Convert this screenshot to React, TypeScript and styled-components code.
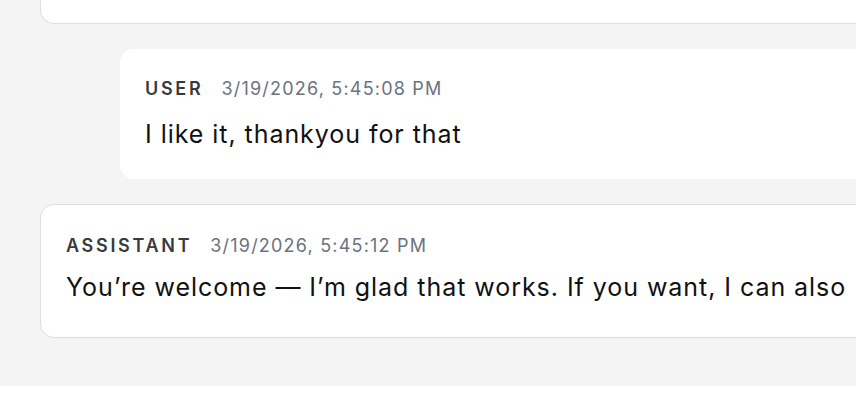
import React from 'react';
import styled, { createGlobalStyle } from 'styled-components';

type Role = 'user' | 'assistant';

interface IMessage {
    id: number;
    role: Role;
    time: string;
    text: string;
}

const messages: IMessage[] = [
    {
        id: 1,
        role: 'assistant',
        time: '3/19/2026, 5:44:51 PM',
        text: 'Here is a cleaner version of the layout with the spacing tightened up.',
    },
    {
        id: 2,
        role: 'user',
        time: '3/19/2026, 5:45:08 PM',
        text: 'I like it, thankyou for that',
    },
    {
        id: 3,
        role: 'assistant',
        time: '3/19/2026, 5:45:12 PM',
        text: 'You\u2019re welcome \u2014 I\u2019m glad that works. If you want, I can also',
    },
];

const App = (): JSX.Element => {
    return (
        <>
            <GlobalStyle />
            <ThreadViewport>
                <MessageList>
                    {messages.map((m) => (
                        <MessageCard key={m.id} $role={m.role}>
                            <MessageHeader>
                                <RoleLabel>{m.role}</RoleLabel>
                                <TimeStamp>{m.time}</TimeStamp>
                            </MessageHeader>
                            <MessageBody>{m.text}</MessageBody>
                        </MessageCard>
                    ))}
                </MessageList>
            </ThreadViewport>
        </>
    );
};

export default App;

const GlobalStyle = createGlobalStyle`
    html, body {
        margin: 0;
        padding: 0;
        background: #fff;
        overflow: hidden;
    }
    body {
        font-family: Inter, "Noto Sans", "Liberation Sans", sans-serif;
        -webkit-font-smoothing: antialiased;
    }
`;

const ThreadViewport = styled.div`
    height: 386px;
    background: #f4f4f4;
    overflow: hidden;
    padding-left: 40px;
`;

// list is scrolled, so the first message only shows its bottom edge
const MessageList = styled.div`
    width: 1200px;
    margin-top: -110px;
    display: flex;
    flex-direction: column;
    gap: 25px;
`;

const MessageCard = styled.div<{ $role: Role }>`
    background: #fff;
    border-radius: 14px;
    border: ${(p) => (p.$role === 'user' ? 'none' : '1px solid #dedede')};
    margin-left: ${(p) => (p.$role === 'user' ? '80px' : '0')};
    padding: ${(p) => (p.$role === 'user' ? '28px 25px 28px' : '29px 25px 33px')};
    display: flex;
    flex-direction: column;
    gap: ${(p) => (p.$role === 'user' ? '16px' : '12px')};
`;

const MessageHeader = styled.div`
    display: flex;
    flex-direction: row;
    align-items: baseline;
    gap: 18px;
    line-height: 24px;
`;

const RoleLabel = styled.span`
    font-size: 18px;
    font-weight: 600;
    text-transform: uppercase;
    letter-spacing: 2.7px;
    color: #3a3a3a;
`;

const TimeStamp = styled.span`
    font-size: 18px;
    letter-spacing: 1.2px;
    color: #6b7280;
`;

const MessageBody = styled.div`
    font-size: 25px;
    line-height: 34px;
    letter-spacing: 0.95px;
    color: #111;
    white-space: nowrap;
`;
